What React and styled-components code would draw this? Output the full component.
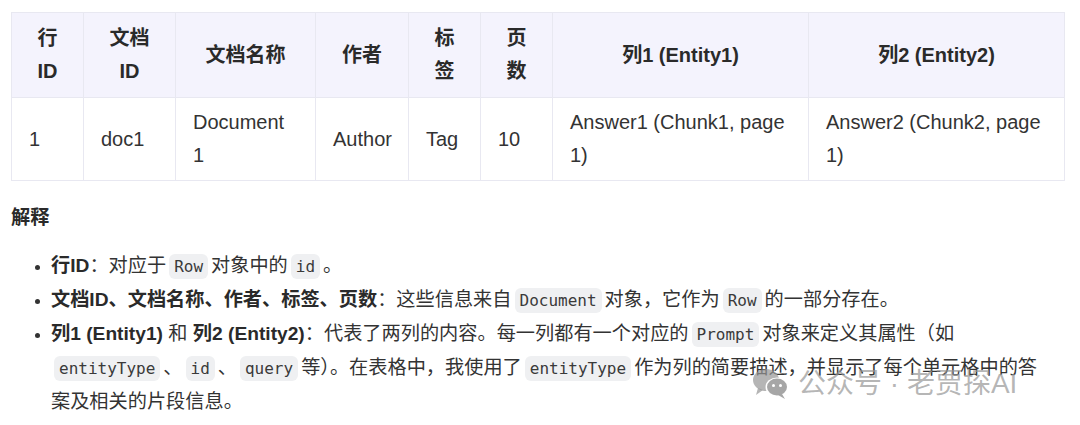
import React from "react";
import styled, { createGlobalStyle } from "styled-components";

const Global = createGlobalStyle`
  html, body { margin: 0; padding: 0; background: #ffffff; }
  body {
    font-family: "Liberation Sans", "Noto Sans CJK SC", sans-serif;
    color: #333333;
  }
`;

const Page = styled.div`
  position: relative;
  width: 1080px;
  height: 425px;
  overflow: hidden;
  padding: 12px 16px 0 11px;
  box-sizing: border-box;
`;

const Table = styled.table`
  width: 1053px;
  table-layout: fixed;
  border-collapse: collapse;
  font-size: 20px;
  line-height: 33px;
`;

const HeadCell = styled.th`
  background: #f4f3fd;
  border: 1px solid #e8e8f1;
  padding: 9px 17px;
  font-weight: 700;
  color: #2a2a2a;
  text-align: center;
  vertical-align: middle;
`;

const Cell = styled.td`
  border: 1px solid #e8e8f1;
  padding: 8px 17px;
  text-align: left;
  vertical-align: middle;
  color: #333333;
`;

const Heading = styled.div`
  margin-top: 20px;
  font-size: 19.2px;
  line-height: 34px;
  font-weight: 700;
  color: #2a2a2a;
`;

const List = styled.ul`
  margin: 14px 0 0 0;
  padding-left: 40px;
  width: 999px;
  font-size: 19.2px;
  line-height: 34px;
  color: #333333;
`;

const Item = styled.li`
  &::marker { font-size: 15px; }
`;

const Strong = styled.strong`
  font-weight: 700;
  color: #2a2a2a;
`;

const Code = styled.code`
  font-family: "DejaVu Sans Mono", "Liberation Mono", monospace;
  font-size: 16px;
  line-height: 20px;
  background: #eff0f2;
  color: #3a3a3a;
  border-radius: 6px;
  padding: 3px 5px;
  margin: 0 3px;
`;

const Watermark = styled.div`
  position: absolute;
  left: 752px;
  top: 366px;
  display: flex;
  align-items: center;
  gap: 8px;
  font-size: 28px;
  line-height: 36px;
  color: rgba(150, 150, 150, 0.7);
  pointer-events: none;
  white-space: nowrap;
`;

const cols = [72, 92, 140, 93, 72, 72, 256, 256];

const WeChat = () => (
  <svg width="38" height="32" viewBox="0 0 38 32">
    <ellipse cx="14" cy="12" rx="13" ry="11" fill="rgba(150,150,150,0.7)" />
    <path d="M6 20 L4 27 L11 22 Z" fill="rgba(150,150,150,0.7)" />
    <ellipse cx="25" cy="19" rx="11.5" ry="9.5" fill="#ffffff" />
    <ellipse cx="25" cy="19" rx="10" ry="8.5" fill="rgba(150,150,150,0.85)" />
    <path d="M30 26 L33 31 L26 27 Z" fill="rgba(150,150,150,0.85)" />
    <circle cx="21.5" cy="17.5" r="1.5" fill="#fff" />
    <circle cx="28.5" cy="17.5" r="1.5" fill="#fff" />
  </svg>
);

export default function App() {
  return (
    <Page>
      <Global />
      <Table>
        <colgroup>
          {cols.map((w, i) => (
            <col key={i} style={{ width: w }} />
          ))}
        </colgroup>
        <thead>
          <tr>
            <HeadCell>行ID</HeadCell>
            <HeadCell>文档ID</HeadCell>
            <HeadCell>文档名称</HeadCell>
            <HeadCell>作者</HeadCell>
            <HeadCell>标签</HeadCell>
            <HeadCell>页数</HeadCell>
            <HeadCell>列1 (Entity1)</HeadCell>
            <HeadCell>列2 (Entity2)</HeadCell>
          </tr>
        </thead>
        <tbody>
          <tr>
            <Cell>1</Cell>
            <Cell>doc1</Cell>
            <Cell>Document 1</Cell>
            <Cell>Author</Cell>
            <Cell>Tag</Cell>
            <Cell>10</Cell>
            <Cell>Answer1 (Chunk1, page 1)</Cell>
            <Cell>Answer2 (Chunk2, page 1)</Cell>
          </tr>
        </tbody>
      </Table>
      <Heading>解释</Heading>
      <List>
        <Item>
          <Strong>行ID</Strong>：对应于<Code>Row</Code>对象中的<Code>id</Code>。
        </Item>
        <Item>
          <Strong>文档ID、文档名称、作者、标签、页数</Strong>：这些信息来自<Code>Document</Code>对象，它作为<Code>Row</Code>的一部分存在。
        </Item>
        <Item>
          <Strong>列1 (Entity1)</Strong> 和 <Strong>列2 (Entity2)</Strong>：代表了两列的内容。每一列都有一个对应的<Code>Prompt</Code>对象来定义其属性（如<Code>entityType</Code>、<Code>id</Code>、<Code>query</Code>等）。在表格中，我使用了<Code>entityType</Code>作为列的简要描述，并显示了每个单元格中的答案及相关的片段信息。
        </Item>
      </List>
      <Watermark>
        <WeChat />
        <span>公众号 · 老贾探AI</span>
      </Watermark>
    </Page>
  );
}
